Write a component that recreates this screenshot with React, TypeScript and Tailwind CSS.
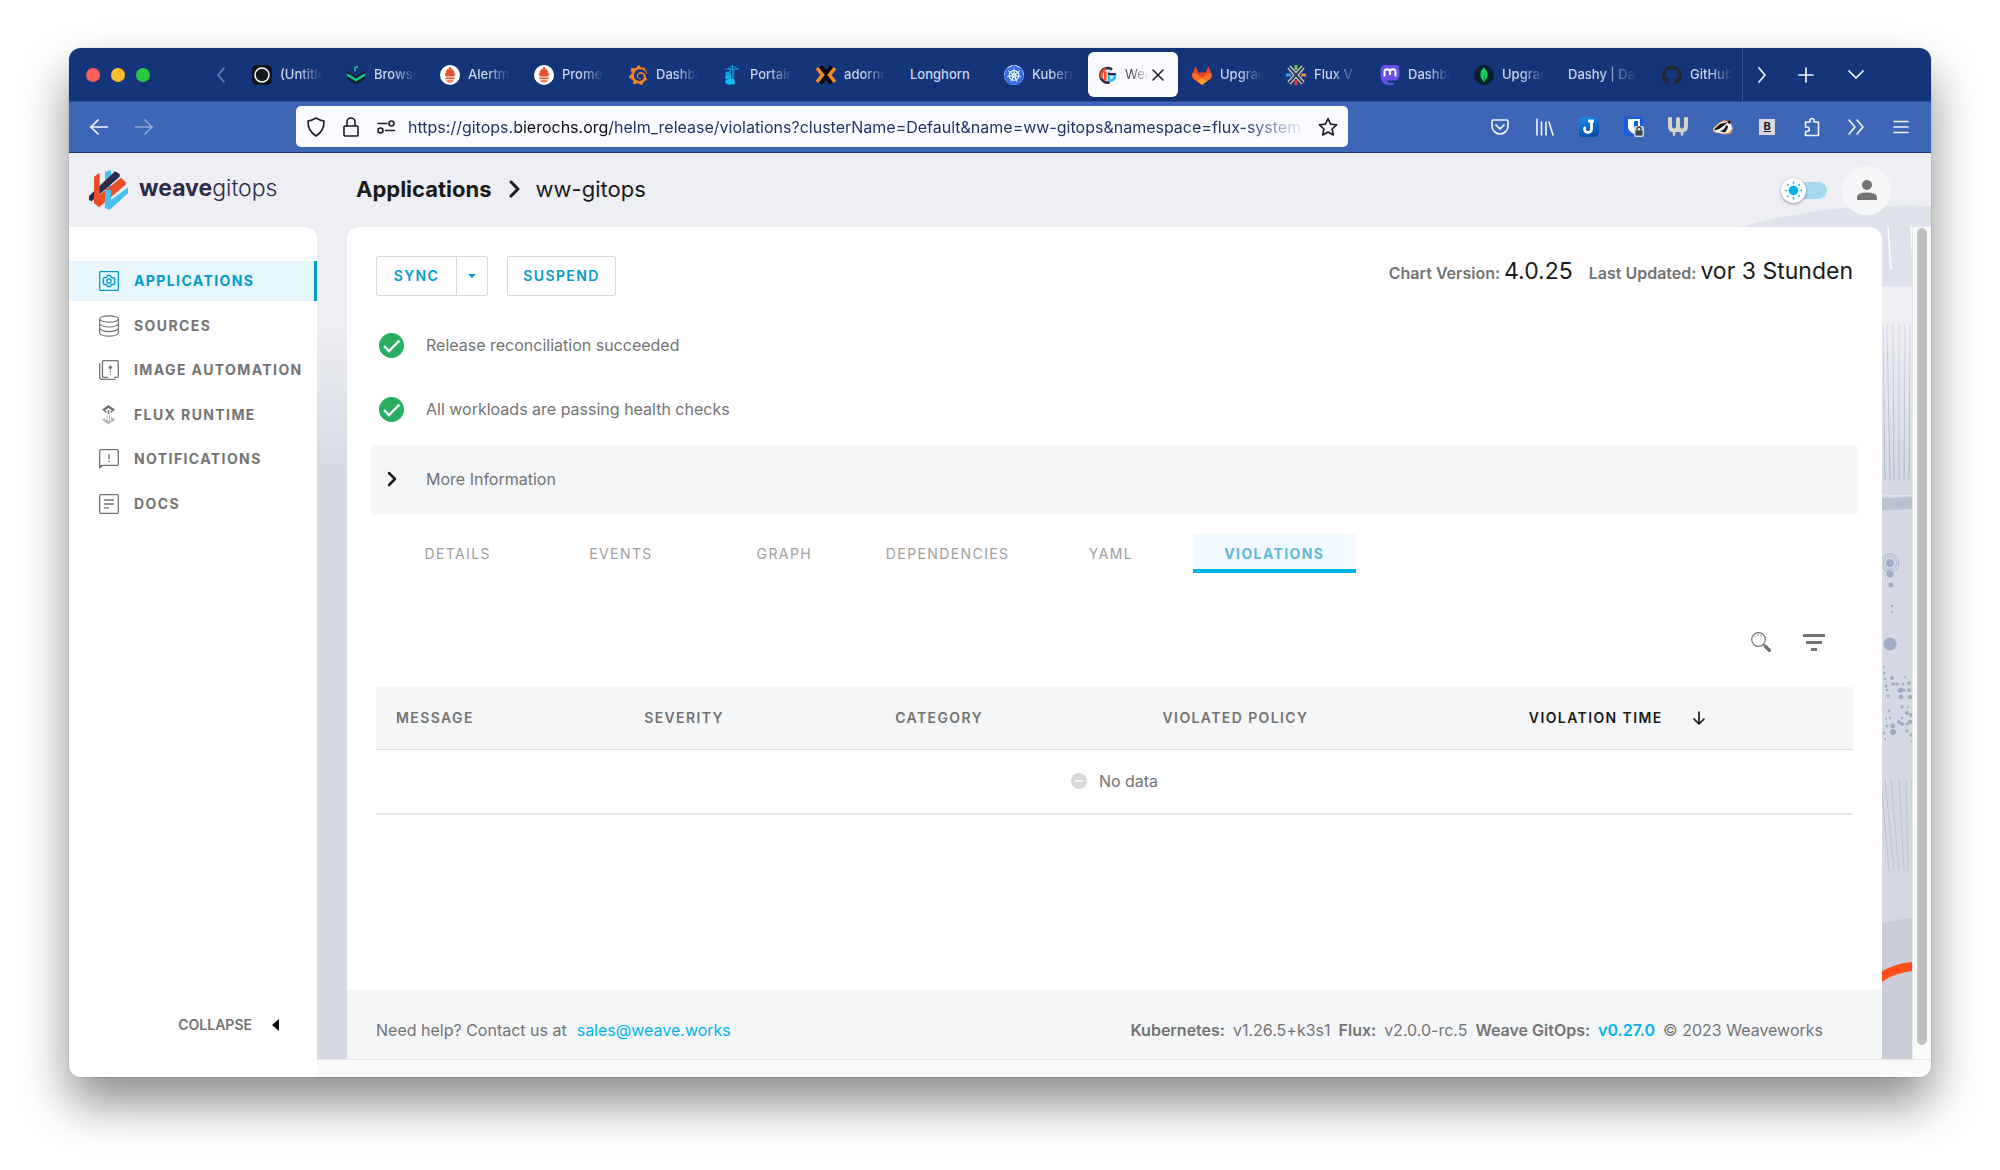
import React from 'react';
import {
  SiGithub,
  SiGrafana,
  SiKubernetes,
  SiMastodon,
  SiMongodb,
  SiPortainer,
  SiPrometheus,
} from 'react-icons/si';

type IconProps = { className?: string };

/* ---------- favicons ---------- */

const OpenSeaIcon = () => (
  <svg viewBox="0 0 20 20" className="size-5" aria-hidden="true">
    <rect width="20" height="20" rx="5" fill="#111316" />
    <circle cx="10" cy="10" r="7" fill="#15181c" stroke="#fff" strokeWidth="1.5" />
  </svg>
);

const RookIcon = () => (
  <svg viewBox="0 0 20 20" className="size-5" fill="none" aria-hidden="true">
    <path d="M1 12.500 10 18l9-5.500" stroke="#17202f" strokeWidth="3" />
    <path d="M1 7 10 12.500 19 7" stroke="#17202f" strokeWidth="2" />
    <path d="M1 9.500 10 15l9-5.500" stroke="#12c98a" strokeWidth="2.400" />
    <path d="M9 6.500V3Q9 1.500 12 1.700" stroke="#12c98a" strokeWidth="1.600" />
  </svg>
);

const PrometheusIcon = () => (
  <svg viewBox="0 0 20 20" className="size-5" aria-hidden="true">
    <circle cx="10" cy="10" r="10" fill="#fff" />
    <path
      d="M10 1.500q2 2 1.600 4 1-.8.8-2 2.200 2.500 1.600 5l1.300-.8q0 2.300-1.300 3.800H6Q4.700 10 4.700 7.700l1.300.8q-.6-2.500 1.600-5-.2 1.200.8 2-.4-2 1.600-4z"
      fill="#e6522c"
    />
    <path d="M5.500 12.500h9v1.700h-9z" fill="#e6522c" />
    <path d="M6.500 15h7v1.200q-1.500 1.600-3.500 1.600t-3.500-1.600z" fill="#ee8a6d" />
  </svg>
);

const GrafanaIcon = () => <SiGrafana className="size-5 text-[#f58220]" />;
const PortainerIcon = () => <SiPortainer className="size-5 text-[#13bef9]" />;

const AdornIcon = () => (
  <svg viewBox="0 0 20 20" className="size-5" fill="none" strokeWidth="4" aria-hidden="true">
    <path d="M4.500 1.500 10 8l5.500-6.500M4.500 18.500 10 12l5.500 6.500" stroke="#050505" />
    <path d="M1 3l5.500 7L1 17M19 3l-5.500 7L19 17" stroke="#f58a1f" strokeWidth="3.500" />
  </svg>
);

const KubernetesIcon = () => (
  <span className="flex size-5 items-center justify-center rounded-full bg-white">
    <SiKubernetes className="size-5 text-[#326ce5]" />
  </span>
);

const WeaveFavicon = () => (
  <svg viewBox="0 0 20 20" className="size-[18px] shrink-0" fill="none" strokeWidth="3" aria-hidden="true">
    <path d="M14.500 4A8 8 0 1 0 12 18" stroke="#2b2a45" />
    <path d="M8 3a8 8 0 0 0-5 10M7 6v10" stroke="#f4502b" />
    <path d="M11 6v9.500q6 2 7-5.500h-5" stroke="#25c0f2" />
    <path d="M10 9h8.500" stroke="#2b2a45" strokeWidth="2.200" />
  </svg>
);

const GitlabIcon = () => (
  <svg viewBox="0 0 20 20" className="size-5" aria-hidden="true">
    <path d="M3.500 1 .5 8.500q-1 4 2 6L10 20l7.500-5.500q3-2 2-6L16.500 1l-2.800 6.500H6.300z" fill="#e24329" />
    <path d="M.5 8.500q-1 4 2 6L6 17l4-4-5-4q-2-1-4.500-.5zM19.500 8.500q1 4-2 6L14 17l-4-4 5-4q2-1 4.500-.5z" fill="#fc6d26" />
    <path d="M10 13l-4.500 3.500L10 20l4.500-3.500z" fill="#fca326" />
  </svg>
);

const FluxFavicon = () => (
  <svg viewBox="0 0 20 20" className="size-5" fill="none" aria-hidden="true">
    <path d="M3 2l14 16M17 2 3 18" stroke="#c9cdd6" strokeWidth="4.500" />
    <path d="M3 2l14 16M17 2 3 18" stroke="#3b4048" strokeWidth="2" />
    <path d="M10 0v5" stroke="#78b943" strokeWidth="3" />
    <path d="M10 15v5" stroke="#e0393e" strokeWidth="3" />
    <path d="M0 10h5" stroke="#3fa3e8" strokeWidth="3" />
    <path d="M15 10h5" stroke="#f08a2c" strokeWidth="3" />
  </svg>
);

const MastodonIcon = () => (
  <svg viewBox="0 0 20 20" className="size-5" fill="none" aria-hidden="true">
    <path d="M5 0h10q4.500 0 4.500 5v5q0 5-4.500 5.500H7q.5 2.500 3.500 2.500 2 0 3.500-.5v2q-2 .5-4 .5Q.5 20 .5 11V5Q.5 0 5 0z" fill="#6450ea" />
    <path d="M4.500 11.500V6.800q0-2.500 2.700-2.500T10 7v3V7q0-2.700 2.800-2.700t2.700 2.500v4.700" stroke="#fff" strokeWidth="2" />
  </svg>
);

const MongoIcon = () => (
  <span className="flex size-5 items-center justify-center rounded-full bg-[#03202b]">
    <SiMongodb className="size-4 text-[#12d45b]" />
  </span>
);

const GithubIcon = () => <SiGithub className="size-5 text-[#22262e]" />;

/* ---------- browser chrome ---------- */

type Tab = { title: string; icon?: () => React.ReactElement; active?: boolean };

const TABS: Tab[] = [
  { title: '(Untitled)', icon: OpenSeaIcon },
  { title: 'Browser', icon: RookIcon },
  { title: 'Alertmanager', icon: PrometheusIcon },
  { title: 'Prometheus', icon: PrometheusIcon },
  { title: 'Dashboards', icon: GrafanaIcon },
  { title: 'Portainer', icon: PortainerIcon },
  { title: 'adorno', icon: AdornIcon },
  { title: 'Longhorn' },
  { title: 'Kubernetes', icon: KubernetesIcon },
  { title: 'Weave', icon: WeaveFavicon, active: true },
  { title: 'Upgrade', icon: GitlabIcon },
  { title: 'Flux V2', icon: FluxFavicon },
  { title: 'Dashboard', icon: MastodonIcon },
  { title: 'Upgrade', icon: MongoIcon },
  { title: 'Dashy | Dash' },
  { title: 'GitHub', icon: GithubIcon },
];

function Line({ d, className, box = 20, width = 2 }: { d: string; className?: string; box?: number; width?: number }) {
  return (
    <svg
      viewBox={`0 0 ${box} ${box}`}
      className={className ?? 'size-5'}
      fill="none"
      stroke="currentColor"
      strokeWidth={width}
      strokeLinecap="round"
      strokeLinejoin="round"
      aria-hidden="true"
    >
      <path d={d} />
    </svg>
  );
}

function BrowserTab({ tab }: { tab: Tab }) {
  const Icon = tab.icon;
  if (tab.active) {
    return (
      <div className="flex h-[45px] min-w-0 items-center rounded-md bg-[#fafbff] pl-[11px] text-[13px] text-[#4a4a55] shadow-sm">
        {Icon && <Icon />}
        <span className="ml-2 w-6 overflow-hidden whitespace-nowrap [mask-image:linear-gradient(to_right,#000_30%,transparent)]">
          {tab.title}
        </span>
        <button aria-label="Close tab" className="ml-0.5 text-[#1b1b22]">
          <Line d="M2 2l10 10M12 2 2 12" box={14} className="size-3.5" width={1.500} />
        </button>
      </div>
    );
  }
  return (
    <button className="flex h-[45px] min-w-0 items-center gap-2 px-[10px] text-left text-[13px] font-medium text-[#cdd5ea]">
      {Icon && (
        <span className="shrink-0">
          <Icon />
        </span>
      )}
      <span
        className={
          tab.title === 'Longhorn'
            ? 'whitespace-nowrap'
            : 'min-w-0 flex-1 overflow-hidden whitespace-nowrap [mask-image:linear-gradient(to_right,#000_45%,transparent)]'
        }
      >
        {tab.title}
      </span>
    </button>
  );
}

function TabStrip() {
  return (
    <div className="flex h-[53px] items-center bg-[#15357b] text-[#f2f4fb]">
      <div className="flex w-[131px] gap-[11px] pl-[17px]">
        <button aria-label="Close window" className="size-3.5 rounded-full bg-[#ff5f57]" />
        <button aria-label="Minimise window" className="size-3.5 rounded-full bg-[#febc2e]" />
        <button aria-label="Zoom window" className="size-3.5 rounded-full bg-[#28c840]" />
      </div>
      <button aria-label="Scroll tabs left" className="flex w-[42px] justify-center text-[#7487b3]">
        <Line d="M13 3 7 10l6 7" width={1.500} />
      </button>
      <div className="grid min-w-0 flex-1 auto-cols-[minmax(0,1fr)] grid-flow-col gap-1">
        {TABS.map((t, i) => (
          <BrowserTab key={i} tab={t} />
        ))}
      </div>
      <div className="flex h-full items-center border-l border-[#3a5592] pr-[50px]">
        <button aria-label="Scroll tabs right" className="flex w-[38px] justify-center">
          <Line d="M7 3l6 7-6 7" width={1.700} />
        </button>
        <button aria-label="New tab" className="flex w-[50px] justify-center">
          <Line d="M10 3v14M3 10h14" width={1.700} />
        </button>
        <button aria-label="List all tabs" className="flex w-[50px] justify-center">
          <Line d="M3 6l7 7 7-7" width={1.700} />
        </button>
      </div>
    </div>
  );
}

const TOOLBAR: { label: string; icon: React.ReactElement }[] = [
  {
    label: 'Pocket',
    icon: <Line d="M3.500 3h13q1.500 0 1.500 1.500V9a8 8 0 0 1-16 0V4.500Q2 3 3.500 3zM6 8l4 4 4-4" width={1.600} />,
  },
  { label: 'Library', icon: <Line d="M2 2v16M6.500 5v13M11 5v13M14 5l4 13" width={1.600} /> },
  {
    label: 'Joplin',
    icon: (
      <svg viewBox="0 0 20 20" className="size-5" aria-hidden="true">
        <defs>
          <linearGradient id="joplin" x2="0.300" y2="1">
            <stop stopColor="#1a8cf0" />
            <stop offset="1" stopColor="#0453a8" />
          </linearGradient>
        </defs>
        <rect width="20" height="20" rx="4.500" fill="url(#joplin)" />
        <path d="M9 4h6M12.500 4v8a3.500 3.500 0 0 1-7 0q0-1 1-2" fill="none" stroke="#fff" strokeWidth="2.800" />
      </svg>
    ),
  },
  {
    label: 'Bitwarden',
    icon: (
      <svg viewBox="0 0 20 20" className="size-5" aria-hidden="true">
        <rect width="19" height="19" rx="1.500" fill="#175ddc" />
        <path d="M4 2h12v8q-1 5-6 7-6-3-6-7z" fill="#fff" />
        <path d="M10 4h4v6q-1 3-4 4.500z" fill="#175ddc" />
        <rect x="10" y="9" width="10" height="11" rx="2" fill="#d7d9dd" />
        <rect x="11.500" y="13.500" width="7" height="5" fill="#3c3f44" />
        <path d="M13 13.500v-1.500a2 2 0 0 1 4 0v1.500" fill="none" stroke="#3c3f44" strokeWidth="1.400" />
      </svg>
    ),
  },
  {
    label: 'Wallabag',
    icon: (
      <svg viewBox="0 0 20 20" className="size-5" fill="none" stroke="#d6d3cb" aria-hidden="true">
        <path d="M2 1.500v7q0 5 4 5t4-4.500V2M10 9q0 4.500 4 4.500t4-5v-7" strokeWidth="4" strokeLinecap="round" />
        <path d="M6 14v3.500M14 14v3.500" strokeWidth="2.500" strokeLinecap="round" />
      </svg>
    ),
  },
  {
    label: 'Privacy Badger',
    icon: (
      <svg viewBox="0 0 20 20" className="size-5" aria-hidden="true">
        <path d="M0 11 7 5l4-2 2 1 4-1.500 1 4 2 5-2 5-6 1-5-1-7-1.500z" fill="#f0a050" />
        <path d="M1.500 11 7 6l5-1.500 5-1 1 5 1 3-3 4-5 1-9-1.500z" fill="#f7f7f7" />
        <path d="M2 11.500 7 7l8-2-4 3.500-4 3-5 2zM7 14q5-1 6-6l2 1q-1 6-4 6.500z" fill="#151515" />
        <path d="M14 4l3-1 1 3-2 1z" fill="#151515" />
      </svg>
    ),
  },
  {
    label: 'Bookmarks extension',
    icon: (
      <span className="flex size-4 items-center justify-center bg-[#d9dade] text-[11px] font-bold text-[#1b1b1b] underline">
        B
      </span>
    ),
  },
  {
    label: 'Extensions',
    icon: (
      <Line
        d="M8 5V3.500a2 2 0 0 1 4 0V5h4.500v13.500h-13v-4H5a2 2 0 0 0 0-4.500H3.500V5z"
        width={1.600}
      />
    ),
  },
  { label: 'More tools', icon: <Line d="M3 3l6 7-6 7M11 3l6 7-6 7" width={1.600} /> },
  { label: 'Menu', icon: <Line d="M3 4.500h14M3 10h14M3 15.500h14" width={1.600} /> },
];

function NavBar() {
  return (
    <div className="flex h-[52px] items-center border-b border-[#15357b] bg-[#3e66b7] pr-2 pl-[7px] text-[#f4f6fc] shadow-[inset_0_1px_0_#2b4f9c]">
      <div className="flex w-[220px]">
        <button aria-label="Back" className="flex w-[45px] justify-center">
          <Line d="M1.500 10h17M9 3l-7 7 7 7" width={1.700} />
        </button>
        <button aria-label="Forward" className="flex w-[45px] justify-center text-[#8ea5d6]">
          <Line d="M1.500 10h17M11 3l7 7-7 7" width={1.700} />
        </button>
      </div>
      <div className="flex h-[41px] min-w-0 flex-1 items-center rounded-[5px] bg-[#fafbff] px-[10px] text-[#1b1b22]">
        <Line d="M10 1q4 2.500 8 3 .5 9.500-8 15-8.500-5.500-8-15 4-.5 8-3z" className="size-5 shrink-0" width={1.600} />
        <Line
          d="M4 9h12q1 0 1 1v8q0 1-1 1H4q-1 0-1-1v-8q0-1 1-1zM6 9V5a4 4 0 0 1 8 0v4"
          className="ml-[15px] size-5 shrink-0"
          width={1.600}
        />
        <svg viewBox="0 0 20 20" className="ml-[15px] size-5 shrink-0" fill="none" stroke="currentColor" strokeWidth="1.600" aria-hidden="true">
          <path d="M1.500 6.500h10M9 13.500h10" />
          <circle cx="15.500" cy="6.500" r="2.500" />
          <circle cx="4.500" cy="13.500" r="2.500" />
        </svg>
        <input
          aria-label="Address"
          defaultValue="https://gitops.bierochs.org/helm_release/violations?clusterName=Default&name=ww-gitops&namespace=flux-system"
          className="mx-3 h-full min-w-0 flex-1 bg-[linear-gradient(to_right,#1d3262_109px,#0a0a0e_109px,#0a0a0e_203px,#1d3262_203px)] bg-clip-text text-base text-transparent outline-none [mask-image:linear-gradient(to_right,#000_93%,transparent)]"
        />
        <button aria-label="Bookmark this page">
          <Line d="M10 1.500l2.600 5.600 6 .7-4.500 4.200 1.200 6L10 15l-5.300 3 1.200-6L1.400 7.800l6-.7z" width={1.600} />
        </button>
      </div>
      <div className="ml-[130px] flex w-[445px]">
        {TOOLBAR.map((t) => (
          <button key={t.label} aria-label={t.label} className="flex flex-1 items-center justify-center">
            {t.icon}
          </button>
        ))}
      </div>
    </div>
  );
}

/* ---------- application ---------- */

const WeaveLogo = () => (
  <svg viewBox="0 0 117 120" className="h-10 w-[39px]" aria-hidden="true">
    <path d="M48 5 66 0v90l-6 28-12-6z" fill="#49c1ef" />
    <path d="M20 84 96 23l14 13v8L30 112z" fill="#eb4d27" />
    <path d="M0 78 78 4l14 8v8L8 94 0 90z" fill="#2d2a4a" />
    <path d="M15 20 32 8v80l-2 24-15-12z" fill="#eb4d27" />
    <path d="M48 60h18v30l51-38v18l-51 46-6 3-12-6z" fill="#49c1ef" />
  </svg>
);

const AppsIcon = ({ className }: IconProps) => (
  <svg viewBox="0 0 20 20" className={className} fill="none" stroke="currentColor" strokeWidth="1.300" aria-hidden="true">
    <rect x="0.700" y="0.700" width="18.600" height="18.600" rx="0.500" />
    <path d="M8.500 4.500h3l.6 1.500 1.200.7 1.600-.3 1.300 2.300-1 1.300 1 1.300-1.300 2.300-1.600-.3-1.200.7-.6 1.500h-3L7.900 14l-1.200-.7-1.600.3-1.300-2.300 1-1.300-1-1.300 1.300-2.300 1.600.3 1.200-.7z" />
    <circle cx="10" cy="10" r="2.200" />
  </svg>
);

const SourcesIcon = ({ className }: IconProps) => (
  <svg viewBox="0 0 20 22" className={className} fill="none" stroke="currentColor" strokeWidth="1.200" aria-hidden="true">
    <ellipse cx="10" cy="4" rx="9.400" ry="3.200" />
    <path d="M.6 4v14q2 3.200 9.400 3.200t9.400-3.200V4M.6 8.800Q2.600 12 10 12t9.400-3.200M.6 13.400q2 3.200 9.400 3.200t9.400-3.200" />
  </svg>
);

const ImageIcon = ({ className }: IconProps) => (
  <svg viewBox="0 0 20 20" className={className} fill="none" stroke="currentColor" strokeWidth="1.300" aria-hidden="true">
    <path d="M9 17.300H4.500q-1 0-1-1V1.700q0-1 1-1h14q.8 0 .8 1v14.600q0 1-1 1H15" />
    <path d="M.7 3v14.500q0 1.800 1.800 1.800h14" />
    <path d="M11.400 8v2M11.400 11v1.500M11.400 13.500v1" />
    <path d="M9 8.300 11.400 5l2.400 3.300z" fill="currentColor" stroke="none" />
  </svg>
);

const FluxIcon = ({ className }: IconProps) => (
  <svg viewBox="0 0 20 20" className={className} fill="currentColor" aria-hidden="true">
    <path d="M9.500 0 16 4.600 11.800 8.200V5.800h1.500L9.500 3 5.700 5.800h1.500v2.400L3 4.600z" />
    <path d="M8.700 5h1.600v4.400H8.700z" />
    <path d="M3 14.500l3-1.800v2.200h1.500V11h1v5h1.500v-5.500h1V16h1v-4l4 2.500-6.500 5z" opacity="0.550" />
  </svg>
);

const NoticeIcon = ({ className }: IconProps) => (
  <svg viewBox="0 0 20 20" className={className} fill="none" stroke="currentColor" strokeWidth="1.300" aria-hidden="true">
    <path d="M.7 18.500V1.700q0-1 1-1h16.600q1 0 1 1v13.600q0 1-1 1H3.500z" />
    <path d="M10 5v5M10 11.500v1.500" />
    <path d="M.7 16h3.300l-3.300 4z" fill="currentColor" stroke="none" />
  </svg>
);

const DocsIcon = ({ className }: IconProps) => (
  <svg viewBox="0 0 20 20" className={className} fill="none" stroke="currentColor" strokeWidth="1.300" aria-hidden="true">
    <rect x="0.700" y="0.700" width="18.600" height="18.600" rx="0.800" />
    <path d="M5 6h10M5 10h10M5 13.800h5" />
  </svg>
);

const NAV = [
  { label: 'APPLICATIONS', Icon: AppsIcon, active: true },
  { label: 'SOURCES', Icon: SourcesIcon },
  { label: 'IMAGE AUTOMATION', Icon: ImageIcon },
  { label: 'FLUX RUNTIME', Icon: FluxIcon },
  { label: 'NOTIFICATIONS', Icon: NoticeIcon },
  { label: 'DOCS', Icon: DocsIcon },
];

/* Decorative scenery that shows behind the header and beside the card. */
const DOTS: [number, number, number][] = [
  [159, 421, 3.5], [160, 432, 2.5], [161, 453, 1.3], [161, 459, 1], [153, 514, 1], [153, 520, 1.2],
  [154, 526, 1.2], [161, 525, 2], [174, 524, 1], [155, 533, 1.6], [162, 531, 1.8], [166, 531, 1.8],
  [172, 531, 1.2], [178, 530, 2], [170, 537, 2.6], [168, 538, 1.5], [173, 537, 1.5], [178, 537, 2],
  [156, 537, 1.3], [157, 543, 1.3], [170, 544, 2.4], [179, 544, 2.2], [171, 554, 1.7], [177, 554, 1],
  [158, 558, 1.4], [176, 560, 2], [180, 562, 2], [159, 565, 1], [171, 565, 1.3], [155, 566, 1],
  [168, 569, 2], [179, 569, 2.3], [156, 573, 1.6], [162, 573, 2.4], [171, 571, 2], [176, 571, 1.8],
  [162, 579, 3], [176, 578, 1.7], [180, 582, 1.8], [153, 580, 1.2], [154, 586, 1], [181, 588, 1],
];

const STRIPES: [number, number][] = [[152, 154], [156, 159], [162, 163], [168, 168], [174, 173], [179, 178]];
const RAYS: [number, number][] = [[154, 158], [160, 163], [168, 168], [175, 172], [181, 177], [150, 153]];

function Scenery() {
  return (
    <svg viewBox="0 0 200 907" className="absolute top-0 right-0 h-[907px] w-[200px]" fill="none" aria-hidden="true">
      <defs>
        <linearGradient id="stripe" gradientUnits="userSpaceOnUse" x1="0" y1="172" x2="0" y2="327">
          <stop stopColor="#d3d7e0" />
          <stop offset="1" stopColor="#aab3c6" />
        </linearGradient>
      </defs>
      <path d="M9 74Q100 49 200 53v80H9z" fill="#dee3eb" />
      <path d="M157 73l3 44M180 72l2 40" stroke="#fff" strokeWidth="1.500" />
      {STRIPES.map(([a, b], i) => (
        <path key={i} d={`M${a} 172 ${b} 327`} stroke="url(#stripe)" strokeWidth="1" />
      ))}
      <path d="M150 343l50-1" stroke="#e6e9ef" />
      <path d="M150 345l50-1v12l-50 1z" fill="#b8c2d1" />
      <circle cx="159" cy="410" r="9" stroke="#a9b3c9" />
      <circle cx="159" cy="410" r="6.500" stroke="#a9b3c9" />
      <circle cx="159" cy="410" r="4" fill="#a0abc4" />
      <circle cx="159" cy="491" r="6.500" fill="#a0abc4" />
      {DOTS.map(([x, y, r], i) => (
        <circle key={i} cx={x} cy={y} r={r} fill="#a0abc4" />
      ))}
      {RAYS.map(([a, b], i) => (
        <path key={i} d={`M${a} 626 ${b + 5} 718`} stroke="#bfc5d1" strokeWidth="1" />
      ))}
      <path d="M150 770q20-5 50-6v143h-50z" fill="#c9cdd8" />
      <path d="M145 827q20-14 45-14" stroke="#ff4d17" strokeWidth="9" />
    </svg>
  );
}

function Header() {
  return (
    <header className="relative flex h-[74px] items-center pr-10 pl-5">
      <a href="#home" className="flex w-[267px] items-center gap-[11px] text-[23px] leading-8 text-[#2d2a4a]">
        <WeaveLogo />
        <span className="pb-1">
          <span className="font-bold">weave</span>
          <span className="font-light">gitops</span>
        </span>
      </a>
      <nav aria-label="Breadcrumb" className="flex flex-1 items-center pb-0.5 text-[22px] text-[#1a1a1a]">
        <a href="#applications" className="font-bold">
          Applications
        </a>
        <Line d="M7 3l7 7-7 7" className="mx-3 size-5" width={3} />
        <span>ww-gitops</span>
      </nav>
      <label className="relative flex h-6 w-[46px] items-center justify-end">
        <input type="checkbox" aria-label="Dark mode" className="h-[17px] w-[38px] appearance-none rounded-full bg-[#a6d9f1]" />
        <span className="absolute left-0 flex size-[25px] items-center justify-center rounded-full bg-white shadow-[0_1px_3px_rgba(0,0,0,0.4)]">
          <svg viewBox="0 0 20 20" className="size-[19px]" stroke="#00b3ec" strokeWidth="1.600" aria-hidden="true">
            <circle cx="10" cy="10" r="5" fill="#00b3ec" stroke="none" />
            <path d="M10 .8v2M10 17.200v2M.8 10h2M17.200 10h2M3.500 3.500l1.200 1.200M15.300 15.300l1.200 1.200M3.500 16.500l1.200-1.200M15.300 4.700l1.200-1.200" />
          </svg>
        </span>
      </label>
      <button aria-label="Account" className="ml-[15px] flex size-[49px] items-center justify-center rounded-full bg-[#f5f6f8]">
        <svg viewBox="0 0 20 20" className="size-5 text-[#737373]" fill="currentColor" aria-hidden="true">
          <circle cx="10" cy="5" r="5" />
          <path d="M0 20v-2.500Q0 12.500 10 12.500t10 5V20z" />
        </svg>
      </button>
    </header>
  );
}

function Sidebar() {
  return (
    <aside className="flex w-[248px] shrink-0 flex-col rounded-tr-xl bg-white pt-[34px]">
      <nav aria-label="Main" className="flex h-[263px] flex-col justify-between">
        {NAV.map(({ label, Icon, active }) => (
          <a
            key={label}
            href={`#${label.toLowerCase().replace(' ', '-')}`}
            className={
              active
                ? 'flex h-10 items-center gap-[15px] border-r-[3px] border-[#009ccc] bg-[#eaf6fd] pl-[30px] text-sm font-bold tracking-widest text-[#009ccc]'
                : 'flex h-10 items-center gap-[15px] pl-[30px] text-sm font-bold tracking-widest text-[#737373]'
            }
          >
            <Icon className={label === 'SOURCES' ? 'h-[22px] w-5' : 'size-5'} />
            {label}
          </a>
        ))}
      </nav>
      <button className="mt-auto mb-[42px] flex items-center gap-5 self-end pr-[38px] text-sm font-semibold text-[#737373]">
        COLLAPSE
        <svg viewBox="0 0 7 12" className="h-3 w-[7px]" fill="#0a0a0a" aria-hidden="true">
          <path d="M7 0v12L0 6z" />
        </svg>
      </button>
    </aside>
  );
}

function Status({ children }: { children: React.ReactNode }) {
  return (
    <li className="flex h-16 items-center gap-[22px] pl-[3px]">
      <svg viewBox="0 0 25 25" className="size-[25px]" aria-hidden="true">
        <circle cx="12.500" cy="12.500" r="12.500" fill="#27ae60" />
        <path d="M5 13l5 5L20.500 7.500" fill="none" stroke="#fff" strokeWidth="2.400" />
      </svg>
      {children}
    </li>
  );
}

const TAB_LABELS = ['DETAILS', 'EVENTS', 'GRAPH', 'DEPENDENCIES', 'YAML', 'VIOLATIONS'];

function Card() {
  return (
    <main className="flex min-w-0 flex-1 flex-col rounded-t-xl bg-white text-base text-[#737373]">
      <div className="px-[29px] pt-[29px]">
        <div className="flex items-start justify-between">
          <div className="flex gap-[19px] text-sm font-semibold tracking-widest text-[#009ccc]">
            <div className="flex h-10 divide-x divide-[#d8d8d8] rounded-xs border border-[#d8d8d8]">
              <button className="w-20">SYNC</button>
              <button aria-label="Sync options" className="flex w-[30px] items-center justify-center">
                <svg viewBox="0 0 8 4" className="h-1 w-2" fill="currentColor" aria-hidden="true">
                  <path d="M0 0h8L4 4z" />
                </svg>
              </button>
            </div>
            <button className="h-10 w-[109px] rounded-xs border border-[#d8d8d8]">SUSPEND</button>
          </div>
          <dl className="flex items-baseline gap-1 leading-[30px]">
            <dt className="font-semibold">Chart Version:</dt>
            <dd className="mr-3 text-[23px] text-[#1a1a1a]">4.0.25</dd>
            <dt className="font-semibold">Last Updated:</dt>
            <dd className="text-[23px] text-[#1a1a1a]">vor 3 Stunden</dd>
          </dl>
        </div>

        <ul className="mt-[17px] mb-1">
          <Status>Release reconciliation succeeded</Status>
          <Status>All workloads are passing health checks</Status>
        </ul>

        <div className="-mx-[5px]">
          <button className="flex h-[69px] w-full items-center gap-6 rounded bg-[#f5f6f8] pb-px pl-[11px]">
            <Line d="M7 4l6 6-6 6" className="size-5 text-[#1a1a1a]" width={2.500} />
            More Information
          </button>
        </div>

        <div role="tablist" className="mt-5 grid w-[980px] grid-cols-6 text-sm tracking-widest text-[#9e9e9e]">
          {TAB_LABELS.map((t) => (
            <button
              key={t}
              role="tab"
              aria-selected={t === 'VIOLATIONS'}
              className={
                t === 'VIOLATIONS'
                  ? 'h-[39px] border-b-4 border-[#00b3ec] bg-[#f1fbff] pt-1 font-bold text-[#60b8dc]'
                  : 'h-[39px]'
              }
            >
              {t}
            </button>
          ))}
        </div>

        <div className="mt-[59px] flex justify-end gap-8 pr-7 pb-[35px]">
          <button aria-label="Search">
            <svg viewBox="0 0 20 20" className="size-5" fill="none" stroke="currentColor" aria-hidden="true">
              <circle cx="7.500" cy="7.500" r="6.800" strokeWidth="1.200" />
              <path d="M3.500 5a5 5 0 0 1 8 0" strokeWidth="0.800" strokeDasharray="2 1" />
              <path d="M12.300 12.300l2 2" strokeWidth="1.400" />
              <path d="M14.300 14.300l4 4" strokeWidth="3.400" strokeLinecap="round" />
            </svg>
          </button>
          <button aria-label="Filter" className="flex w-[22px] flex-col items-center justify-center gap-1">
            <span className="h-[3px] w-[22px] bg-[#737373]" />
            <span className="h-[3px] w-4 bg-[#737373]" />
            <span className="h-[3px] w-1.5 bg-[#737373]" />
          </button>
        </div>

        <table className="w-full table-fixed border-collapse">
          <thead>
            <tr className="h-[62px] border-b border-[#dcdee2] bg-[#f5f6f8] text-left text-sm tracking-widest [&>th]:pl-5 [&>th]:font-semibold">
              <th scope="col" className="w-[16.8%]">MESSAGE</th>
              <th scope="col" className="w-[17%]">SEVERITY</th>
              <th scope="col" className="w-[18.1%]">CATEGORY</th>
              <th scope="col" className="w-[24.8%]">VIOLATED POLICY</th>
              <th scope="col" className="text-[#1a1a1a]">
                <button className="flex items-center gap-7">
                  VIOLATION TIME
                  <Line d="M8 2v12M3 9l5 5 5-5" box={16} className="size-4" width={1.700} />
                </button>
              </th>
            </tr>
          </thead>
          <tbody>
            <tr className="h-[65px] border-b-2 border-[#e5e5e5]">
              <td colSpan={5}>
                <div className="flex items-center justify-center gap-3">
                  <svg viewBox="0 0 16 16" className="size-4" aria-hidden="true">
                    <circle cx="8" cy="8" r="8" fill="#d8d8d8" />
                    <path d="M4 8h8" stroke="#fff" strokeWidth="1.600" />
                  </svg>
                  No data
                </div>
              </td>
            </tr>
          </tbody>
        </table>
      </div>

      <footer className="mt-auto flex h-[69px] items-center justify-between bg-[#f5f6f8] pt-2.5 pr-[59px] pl-[29px]">
        <p>
          Need help? Contact us at
          <a href="mailto:sales@weave.works" className="ml-[10px] text-[#00b3ec]">
            sales@weave.works
          </a>
        </p>
        <p className="flex gap-2">
          <b className="font-semibold">Kubernetes:</b>
          <span>v1.26.5+k3s1</span>
          <b className="font-semibold">Flux:</b>
          <span>v2.0.0-rc.5</span>
          <b className="font-semibold">Weave GitOps:</b>
          <a href="#release" className="font-semibold text-[#00b3ec]">
            v0.27.0
          </a>
          <span>© 2023 Weaveworks</span>
        </p>
      </footer>
    </main>
  );
}

export default function App() {
  return (
    <div className="flex min-h-screen flex-col bg-white px-[69px] pt-12 pb-[93px] font-['Inter',sans-serif]">
      <div className="flex flex-1 flex-col overflow-hidden rounded-xl shadow-[0_0_1px_rgba(0,0,0,0.6),0_26px_48px_rgba(0,0,0,0.45)]">
        <TabStrip />
        <NavBar />
        <div className="relative flex flex-1 flex-col bg-[linear-gradient(#eeeff4_170px,#d5d9e4_330px)]">
          <Scenery />
          <Header />
          <div className="relative flex flex-1">
            <Sidebar />
            <div className="flex min-w-0 flex-1 flex-col">
              <div className="flex flex-1">
                <div className="flex min-w-0 flex-1 pr-[30px] pl-[30px]">
                  <Card />
                </div>
                <div className="flex w-[19px] border-l border-[#ebebeb] bg-[#fafafa] pt-px pr-1 pb-3.5 pl-1">
                  <div className="flex-1 rounded-full bg-[#c1c1c1]" />
                </div>
              </div>
              <div className="h-[18px] border-t border-[#e8e8e8] bg-[#fafafa]" />
            </div>
          </div>
        </div>
      </div>
    </div>
  );
}
